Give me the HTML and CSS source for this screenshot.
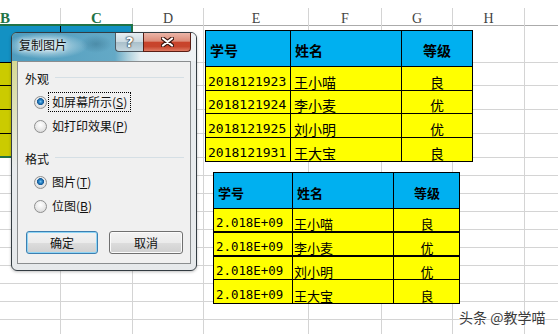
FILE: index.html
```html
<!DOCTYPE html>
<html lang="zh-CN">
<head>
  <meta charset="UTF-8">
  <meta name="viewport" content="width=device-width, initial-scale=1.0">
  <title>复制图片</title>
  <link rel="stylesheet" href="styles.css">
</head>
<body>
  <div class="screen">
    <!-- column letters -->
    <div class="col-heads">
      <span class="sel first">B</span><span class="sel">C</span><span>D</span><span>E</span><span>F</span><span>G</span><span>H</span><span></span>
    </div>

    <!-- worksheet cells -->
    <div class="sheet">
      <div class="row tall"><span class="blue"></span><span class="blue"></span><span></span><span></span><span></span><span></span><span></span><span></span></div>
      <div class="row mid-s"><span class="olive"></span><span class="olive"></span><span></span><span></span><span></span><span></span><span></span><span></span></div>
      <div class="row mid"><span class="olive"></span><span class="olive"></span><span></span><span></span><span></span><span></span><span></span><span></span></div>
      <div class="row mid"><span class="olive"></span><span class="olive"></span><span></span><span></span><span></span><span></span><span></span><span></span></div>
      <div class="row mid"><span class="olive"></span><span class="olive"></span><span></span><span></span><span></span><span></span><span></span><span></span></div>
      <div class="row"><span></span><span></span><span></span><span></span><span></span><span></span><span></span><span></span></div>
      <div class="row"><span></span><span></span><span></span><span></span><span></span><span></span><span></span><span></span></div>
      <div class="row"><span></span><span></span><span></span><span></span><span></span><span></span><span></span><span></span></div>
      <div class="row"><span></span><span></span><span></span><span></span><span></span><span></span><span></span><span></span></div>
      <div class="row"><span></span><span></span><span></span><span></span><span></span><span></span><span></span><span></span></div>
      <div class="row"><span></span><span></span><span></span><span></span><span></span><span></span><span></span><span></span></div>
      <div class="row"><span></span><span></span><span></span><span></span><span></span><span></span><span></span><span></span></div>
      <div class="row"><span></span><span></span><span></span><span></span><span></span><span></span><span></span><span></span></div>
      <div class="row"><span></span><span></span><span></span><span></span><span></span><span></span><span></span><span></span></div>
      <div class="row"><span></span><span></span><span></span><span></span><span></span><span></span><span></span><span></span></div>
    </div>
    <div class="selection"></div>

    <!-- pasted picture: as shown on screen -->
    <div class="pic pic-a">
      <div class="hd">学号</div><div class="hd">姓名</div><div class="hd center">等级</div>
      <div class="bd num">2018121923</div><div class="bd">王小喵</div><div class="bd center">良</div>
      <div class="bd num">2018121924</div><div class="bd">李小麦</div><div class="bd center">优</div>
      <div class="bd num">2018121925</div><div class="bd">刘小明</div><div class="bd center">优</div>
      <div class="bd num">2018121931</div><div class="bd">王大宝</div><div class="bd center">良</div>
    </div>

    <!-- pasted picture: as printed -->
    <div class="pic pic-b">
      <div class="hd">学号</div><div class="hd">姓名</div><div class="hd center">等级</div>
      <div class="bd num thick">2.018E+09</div><div class="bd thick">王小喵</div><div class="bd center thick">良</div>
      <div class="bd num thick">2.018E+09</div><div class="bd thick">李小麦</div><div class="bd center thick">优</div>
      <div class="bd num">2.018E+09</div><div class="bd">刘小明</div><div class="bd center">优</div>
      <div class="bd num">2.018E+09</div><div class="bd">王大宝</div><div class="bd center">良</div>
    </div>

    <div class="dialog">
      <div class="titlebar">
        <span class="title">复制图片</span>
        <div class="caption-btns">
          <span class="cap help">?</span>
          <span class="cap close">
            <svg width="13" height="10" viewBox="0 0 13 10">
              <path d="M2 1.5 L11 8.5 M11 1.5 L2 8.5" stroke="#3a1610" stroke-width="4.2" stroke-linecap="round"/>
              <path d="M2 1.5 L11 8.5 M11 1.5 L2 8.5" stroke="#fff" stroke-width="2.2" stroke-linecap="round"/>
            </svg>
          </span>
        </div>
      </div>
      <div class="client">
        <div class="group">外观</div>
        <label class="radio"><i class="dot on"></i><span class="focus">如屏幕所示(<u>S</u>)</span></label>
        <label class="radio"><i class="dot"></i><span>如打印效果(<u>P</u>)</span></label>
        <div class="group second">格式</div>
        <label class="radio"><i class="dot on"></i><span>图片(<u>T</u>)</span></label>
        <label class="radio"><i class="dot"></i><span>位图(<u>B</u>)</span></label>
        <div class="buttons">
          <button class="btn default">确定</button>
          <button class="btn cancel">取消</button>
        </div>
      </div>
    </div>

    <div class="watermark">头条 @教学喵</div>
  </div>
</body>
</html>
```

FILE: styles.css
```css
* {
  box-sizing: border-box;
}
body {
  margin: 0;
  background: #fff;
  font-family: "Noto Sans CJK SC", sans-serif;
  overflow: hidden;
}
.screen {
  position: relative;
  width: 558px;
  height: 334px;
  overflow: hidden;
}

/* worksheet */
.col-heads,
.row {
  display: grid;
  grid-template-columns: 61px 72px 71px 105px 73px 71px 72px 76px;
}
.col-heads {
  margin-top: 8px;
  height: 18px;
  border-bottom: 1px solid #ababab;
}
.col-heads span {
  display: flex;
  align-items: center;
  justify-content: center;
  padding-top: 2px;
  border-right: 1px solid #d4d4d4;
  font: 14px "Liberation Serif", serif;
  color: #444;
}
.col-heads .sel {
  color: #217346;
  font-weight: bold;
  font-size: 15px;
}
.col-heads .first {
  justify-content: flex-start;
}
.row {
  height: 18px;
}
.row.tall {
  height: 37px;
}
.row.mid {
  height: 24px;
}
.row.mid-s {
  height: 23px;
}
.row span {
  border-right: 1px solid #d4d4d4;
  border-bottom: 1px solid #d4d4d4;
}
.row .blue {
  background: #1391c3;
  border-color: #000;
}
.row .olive {
  background: #cbcb00;
  border-color: #000;
}
.selection {
  position: absolute;
  left: -3px;
  top: 24px;
  width: 136px;
  height: 134px;
  border: 2px solid #217346;
}

/* pasted pictures */
.pic {
  position: absolute;
  display: grid;
  border-left: 1px solid #000;
  border-top: 1px solid #000;
}
.pic-a {
  left: 205px;
  top: 30px;
  grid-template-columns: 85px 111px 71px;
  grid-template-rows: 36px 24px 23px 24px 24px;
}
.pic-b {
  left: 213px;
  top: 172px;
  grid-template-columns: 79px 101px 66px;
  grid-template-rows: 36px 24px 24px 23px 24px;
}
.pic > div {
  border-right: 1px solid #000;
  border-bottom: 1px solid #000;
  display: flex;
  line-height: 1;
  color: #000;
}
.pic .hd {
  background: #00b0f0;
  align-items: center;
  padding: 3px 0 0 4px;
  font-size: 14px;
  font-weight: bold;
}
.pic .bd {
  background: #ff0;
  align-items: flex-end;
  padding: 0 0 1px 3px;
  font-size: 14px;
}
.pic .num {
  font-family: "DejaVu Sans Mono", monospace;
  font-size: 13px;
  padding-left: 2px;
  padding-bottom: 2px;
}
.pic .center {
  justify-content: center;
  padding-left: 0;
}
.pic-b .hd,
.pic-b .bd {
  font-size: 13px;
}
.pic-b .bd {
  padding-left: 1px;
}
.pic-b .num {
  font-size: 12.4px;
  padding-left: 2px;
}
.pic-b .center {
  padding-left: 1px;
}
.pic-b .thick {
  border-bottom-width: 2px;
}

/* dialog */
.dialog {
  position: absolute;
  left: 11px;
  top: 32px;
  width: 186px;
  height: 239px;
  display: flex;
  flex-direction: column;
  border: 1px solid #333c42;
  border-radius: 6px;
  overflow: hidden;
  background:
    linear-gradient(180deg, rgba(200, 200, 70, 0.55) 28px, rgba(200, 200, 70, 0) 135px) 0 0 / 6px 100% no-repeat,
    linear-gradient(180deg, #e9edf0, #e6e9eb);
  box-shadow: 0 1px 3px rgba(0, 0, 0, 0.25);
}
.titlebar {
  height: 28px;
  display: flex;
  align-items: flex-start;
  background:
    radial-gradient(ellipse 42px 13px at 34px 13px, rgba(228, 240, 245, 0.95), rgba(228, 240, 245, 0)),
    radial-gradient(ellipse 16px 9px at 84px 11px, rgba(30, 80, 105, 0.3), rgba(30, 80, 105, 0)),
    linear-gradient(90deg, #4f9cbe 0, #64a9c6 56%, #acd0dd 63%, #e8eff2 70%, #eff2f4 100%);
}
.title {
  padding: 3px 0 0 7px;
  font-size: 12px;
  line-height: 18px;
  color: #111;
  text-shadow: 0 0 6px #e8f2f6, 0 0 3px #e8f2f6;
}
.caption-btns {
  display: flex;
  margin: 0 5px 0 auto;
}
.cap {
  height: 19px;
  display: flex;
  align-items: center;
  justify-content: center;
}
.help {
  width: 28px;
  border: 1px solid #4d5a63;
  border-top: none;
  border-right: none;
  border-radius: 0 0 0 4px;
  background: linear-gradient(180deg, #e7eef2 0, #ccdbe2 48%, #aac0cb 52%, #c4d6de 100%);
  color: #fff;
  font: bold 14px "DejaVu Sans", sans-serif;
  text-shadow: 0 0 1px #1c2a33, 0 0 1px #1c2a33, 0 0 2px #1c2a33;
}
.close {
  width: 48px;
  border: 1px solid #5a1d14;
  border-top: none;
  border-radius: 0 0 4px 0;
  background: linear-gradient(180deg, #ebb5a8 0, #dc8c79 45%, #c8432b 52%, #c7452d 75%, #df7a62 100%);
}
.client {
  height: 203px;
  margin: 0 5px;
  padding: 4px 6px 0 7px;
  border: 1px solid #8a8d8f;
  background: #f0f0f0;
  font-size: 12px;
  color: #111;
}
.group {
  display: flex;
  align-items: center;
  gap: 6px;
  height: 24px;
}
.group::after {
  content: "";
  flex: 1;
  height: 1px;
  margin-top: -2px;
  background: #d5dfe5;
}
.group.second {
  margin-top: 8px;
}
.radio {
  display: flex;
  align-items: center;
  gap: 3px;
  height: 24px;
  padding-left: 9px;
}
.radio span {
  padding: 0 2px;
  line-height: 16px;
}
.radio u {
  text-decoration-thickness: 1px;
  text-underline-offset: 1px;
}
.radio .focus {
  outline: 1px dotted #000;
  outline-offset: 1px;
}
.dot {
  width: 13px;
  height: 13px;
  border-radius: 50%;
  border: 1px solid #8e8f8f;
  background: radial-gradient(circle at 50% 35%, #ffffff 0, #e6e6e6 60%, #cfcfcf 100%);
}
.dot.on {
  background:
    radial-gradient(circle at 50% 42%, #7cc7f3 0, #2b86c8 1.6px, #175a96 3.2px, rgba(23, 90, 150, 0) 3.8px),
    radial-gradient(circle at 50% 35%, #ffffff 0, #e6e6e6 60%, #cfcfcf 100%);
}
.buttons {
  display: flex;
  gap: 11px;
  margin: 13px 0 0 1px;
}
.btn {
  height: 23px;
  padding: 0;
  border: 1px solid #707070;
  border-radius: 3px;
  background: linear-gradient(180deg, #f2f2f2 0, #ebebeb 50%, #dddddd 51%, #cfcfcf 100%);
  box-shadow: inset 0 0 0 1px #fbfbfb;
  font: 12px "Noto Sans CJK SC", sans-serif;
  color: #111;
}
.btn.default {
  width: 72px;
  border-color: #3c7fb1;
  box-shadow: inset 0 0 0 1px #8fd5f5;
}
.btn.cancel {
  width: 74px;
}

.watermark {
  position: absolute;
  left: 459px;
  top: 308px;
  font-size: 14px;
  line-height: 18px;
  color: #3c3c3c;
  text-shadow: 0 0 2px #fff, 0 0 2px #fff;
}
```
